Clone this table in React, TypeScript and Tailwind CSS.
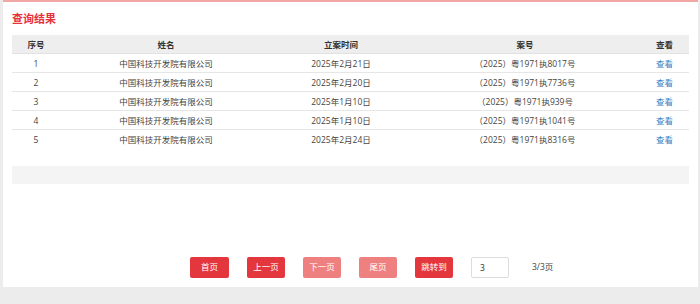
import React from "react";

const rows = [
  { id: "1", name: "中国科技开发院有限公司", date: "2025年2月21日", no: "（2025）粤1971执8017号" },
  { id: "2", name: "中国科技开发院有限公司", date: "2025年2月20日", no: "（2025）粤1971执7736号" },
  { id: "3", name: "中国科技开发院有限公司", date: "2025年1月10日", no: "（2025）粤1971执939号" },
  { id: "4", name: "中国科技开发院有限公司", date: "2025年1月10日", no: "（2025）粤1971执1041号" },
  { id: "5", name: "中国科技开发院有限公司", date: "2025年2月24日", no: "（2025）粤1971执8316号" },
];

const font = { fontFamily: '"Open Sans", "Noto Sans CJK SC", sans-serif' };

export default function App() {
  return (
    <div
      className="w-[700px] h-[304px] bg-[#ececec] pl-[3px] pr-[2px] pb-[17px]"
      style={font}
    >
      <div className="h-full bg-white border-t-2 border-[#f2a7a7] px-[9px] flex flex-col">
        <div className="mt-[8px] h-[18px] text-[11px] leading-[18px] font-bold text-[#e8323a]">
          查询结果
        </div>
        <div className="mt-[7px]">
          <div className="grid grid-cols-[48px_212px_138px_230px_49px] h-[19px] bg-[#eeeeee] border-b border-[#e2e2e2] text-[8.5px] font-bold text-[#333] leading-[19px] text-center">
            <div>序号</div>
            <div>姓名</div>
            <div>立案时间</div>
            <div>案号</div>
            <div>查看</div>
          </div>
          {rows.map((r, i) => (
            <div
              key={r.id}
              className={`grid grid-cols-[48px_212px_138px_230px_49px] h-[19px] text-[8.5px] leading-[20px] text-[#444] text-center ${
                i < rows.length - 1 ? "border-b border-[#e6e6e6]" : ""
              }`}
            >
              <div>{r.id}</div>
              <div>{r.name}</div>
              <div>{r.date}</div>
              <div>{r.no}</div>
              <div className="text-[#3a7fc4]">查看</div>
            </div>
          ))}
        </div>
        <div className="mt-[17px] h-[18px] bg-[#f4f4f4]" />
        <div className="mt-[73px] ml-[178px] flex items-center h-[21px] text-[8.5px]">
          <button className="w-[39px] h-[21px] rounded-[2px] bg-[#e3363d] text-white">首页</button>
          <button className="ml-[18px] w-[38px] h-[21px] rounded-[2px] bg-[#e3363d] text-white">上一页</button>
          <button className="ml-[18px] w-[38px] h-[21px] rounded-[2px] bg-[#ef8080] text-white">下一页</button>
          <button className="ml-[18px] w-[38px] h-[21px] rounded-[2px] bg-[#ef8080] text-white">尾页</button>
          <button className="ml-[18px] w-[38px] h-[21px] rounded-[2px] bg-[#e3363d] text-white">跳转到</button>
          <div className="ml-[18px] w-[38px] h-[21px] rounded-[2px] border border-[#dcdcdc] pl-[8px] leading-[19px] text-[#333]">
            3
          </div>
          <div className="ml-[23px] text-[#444]">3/3页</div>
        </div>
      </div>
    </div>
  );
}
